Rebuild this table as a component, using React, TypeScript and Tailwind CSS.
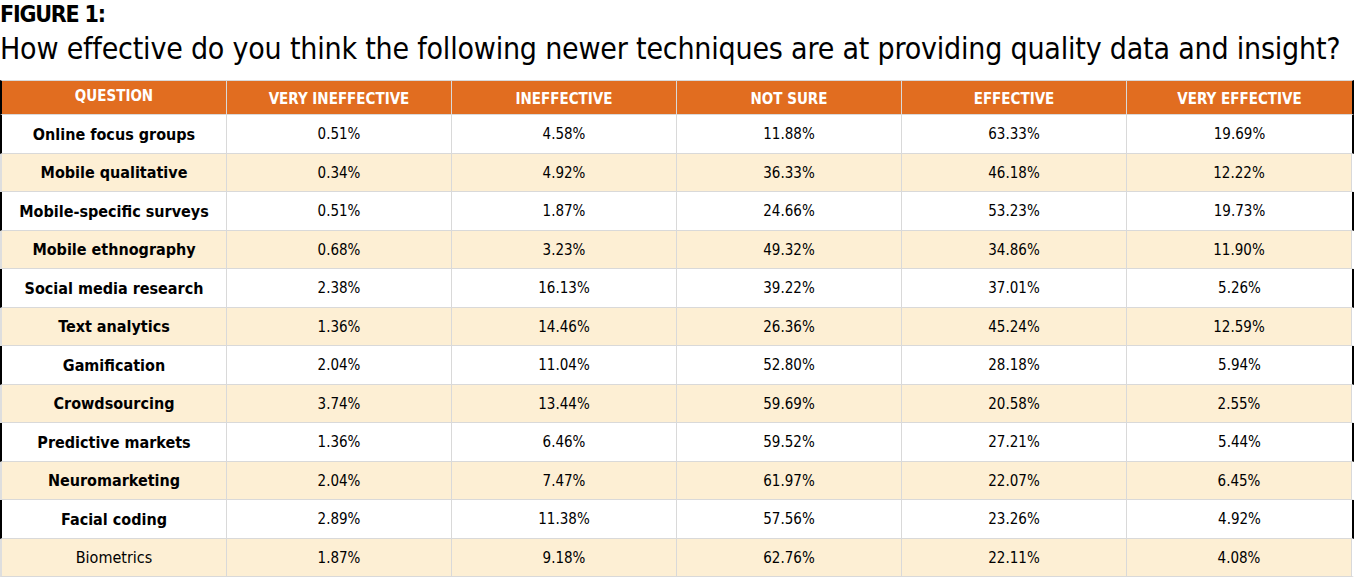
import React from "react";

type Row = {
	label: string;
	values: string[];
	bold?: boolean;
};

const columns = [
	"Question",
	"Very ineffective",
	"Ineffective",
	"Not sure",
	"Effective",
	"Very effective",
];

const rows: Row[] = [
	{ label: "Online focus groups", values: ["0.51%", "4.58%", "11.88%", "63.33%", "19.69%"], bold: true },
	{ label: "Mobile qualitative", values: ["0.34%", "4.92%", "36.33%", "46.18%", "12.22%"], bold: true },
	{ label: "Mobile-specific surveys", values: ["0.51%", "1.87%", "24.66%", "53.23%", "19.73%"], bold: true },
	{ label: "Mobile ethnography", values: ["0.68%", "3.23%", "49.32%", "34.86%", "11.90%"], bold: true },
	{ label: "Social media research", values: ["2.38%", "16.13%", "39.22%", "37.01%", "5.26%"], bold: true },
	{ label: "Text analytics", values: ["1.36%", "14.46%", "26.36%", "45.24%", "12.59%"], bold: true },
	{ label: "Gamification", values: ["2.04%", "11.04%", "52.80%", "28.18%", "5.94%"], bold: true },
	{ label: "Crowdsourcing", values: ["3.74%", "13.44%", "59.69%", "20.58%", "2.55%"], bold: true },
	{ label: "Predictive markets", values: ["1.36%", "6.46%", "59.52%", "27.21%", "5.44%"], bold: true },
	{ label: "Neuromarketing", values: ["2.04%", "7.47%", "61.97%", "22.07%", "6.45%"], bold: true },
	{ label: "Facial coding", values: ["2.89%", "11.38%", "57.56%", "23.26%", "4.92%"], bold: true },
	{ label: "Biometrics", values: ["1.87%", "9.18%", "62.76%", "22.11%", "4.08%"] },
];

const font = "font-['DejaVu_Sans_Condensed','DejaVu_Sans',sans-serif]";

export default function App() {
	return (
		<div className={`w-[1354px] h-[579px] bg-white overflow-hidden text-black ${font}`}>
			{/* title */}
			<div className="h-[80px]">
				<h1 className="text-[23px] leading-[28px] font-bold tracking-[-1.2px]">FIGURE 1:</h1>
				<p className="mt-[1px] text-[30px] leading-[40px] tracking-[-0.2px] whitespace-nowrap">
					How effective do you think the following newer techniques are at providing quality data and insight?
				</p>
			</div>

			{/* header */}
			<div className="flex h-[35px] border-t border-b border-t-[#d9d9d9] border-b-[#d9d9d9] bg-[#e16d20] border-l-2 border-l-black border-r-2 border-r-black box-border">
				{columns.map((c, i) => (
					<div
						key={c}
						className={`w-[225px] flex items-center justify-center text-white font-bold uppercase text-[15px] border-r border-r-[#d9d9d9] ${
							i === 0 ? "pb-[3px]" : "pt-[3px]"
						} ${i === columns.length - 1 ? "border-r-0 w-[224px]" : ""}`}
					>
						{c}
					</div>
				))}
			</div>

			{/* body */}
			{rows.map((r, i) => {
				const cream = i % 2 === 1;
				return (
					<div
						key={r.label}
						className={`flex box-border border-b border-b-[#d9d9d9] border-l-2 border-r-2 ${
							i % 2 === 0 ? "h-[39px]" : "h-[38px]"
						} ${
							cream
								? "bg-[#fdefd4] border-l-[#dedede] border-r-white"
								: "bg-white border-l-black border-r-black"
						}`}
					>
						<div
							className={`w-[225px] flex items-center justify-center pt-[1px] text-[16px] border-r border-r-[#d9d9d9] ${
								r.bold ? "font-bold" : ""
							}`}
						>
							{r.label}
						</div>
						{r.values.map((v, j) => (
							<div
								key={j}
								className={`w-[225px] flex items-center justify-center pt-[1px] text-[15px] border-r border-r-[#d9d9d9] ${
									j === r.values.length - 1 && !cream ? "border-r-0 w-[224px]" : ""
								}`}
							>
								{v}
							</div>
						))}
					</div>
				);
			})}
		</div>
	);
}
